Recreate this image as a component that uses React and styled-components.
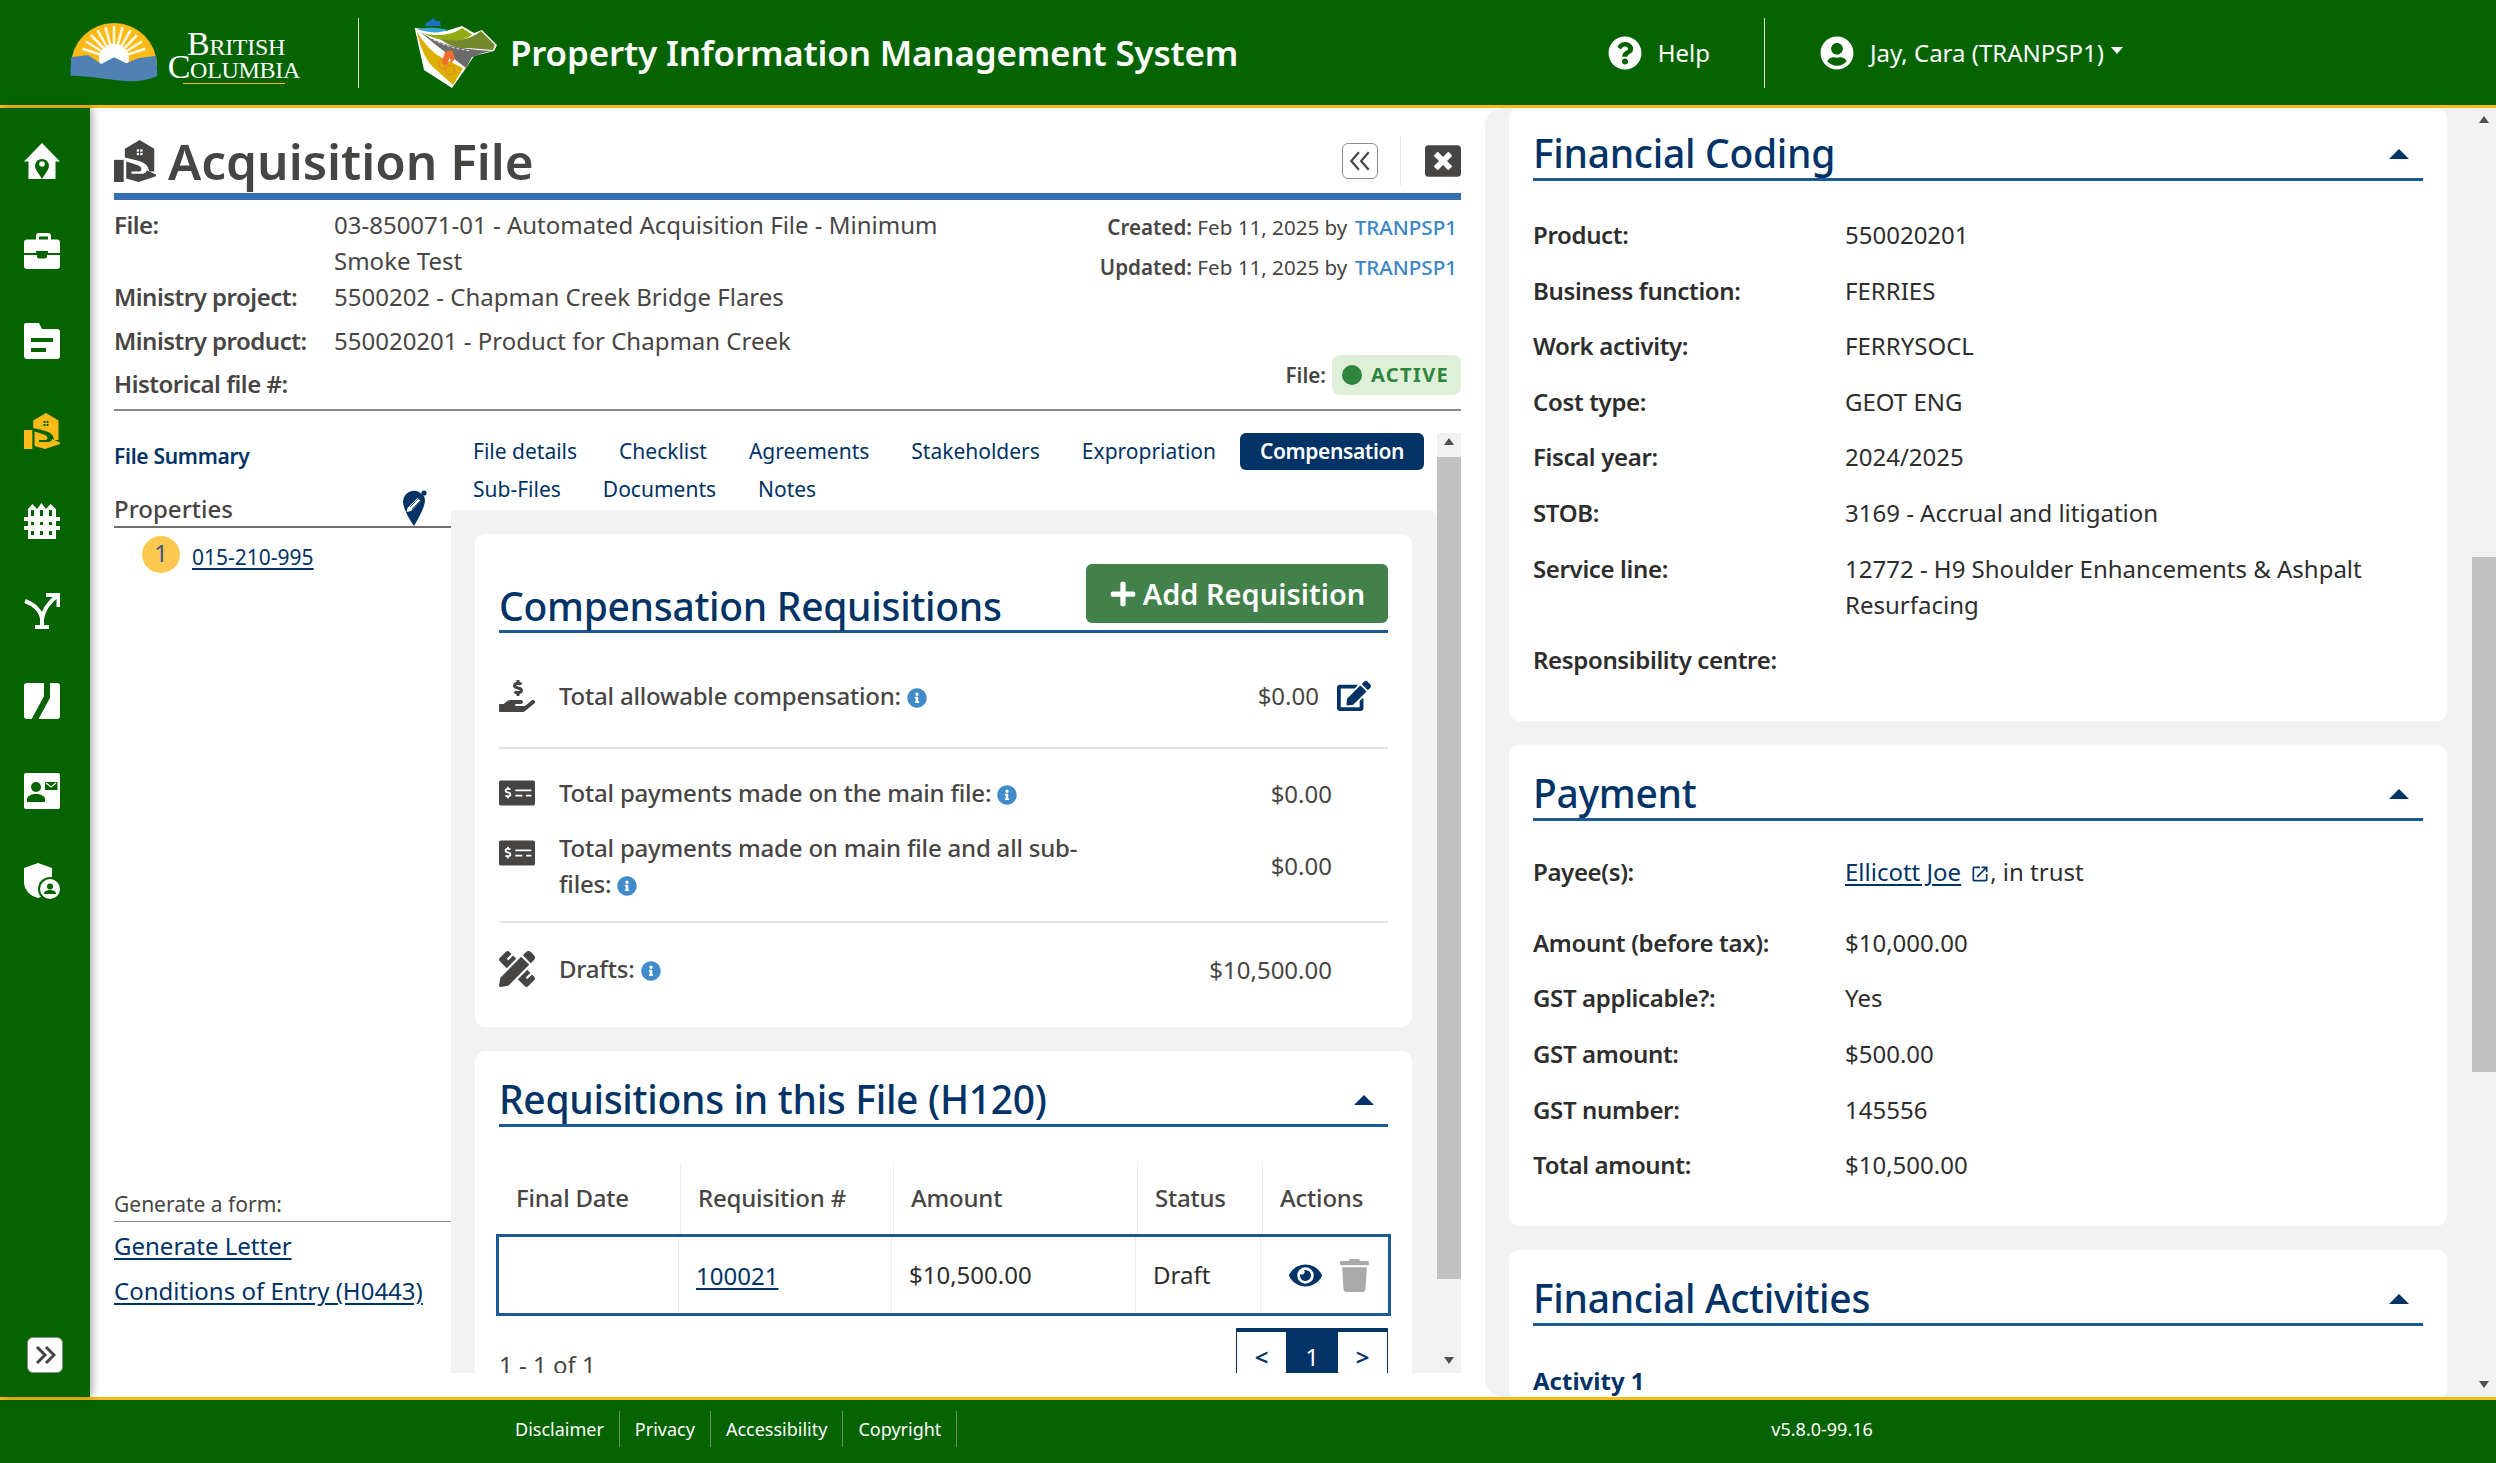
import React from "react"
import styled, { createGlobalStyle } from "styled-components"
import {
  FaEdit,
  FaEye,
  FaHandHoldingUsd,
  FaInfoCircle,
  FaMoneyCheckAlt,
  FaPencilRuler,
  FaPlus,
  FaQuestionCircle,
  FaTrash,
  FaUserCircle,
  FaWindowClose,
} from "react-icons/fa"
import { MdOpenInNew } from "react-icons/md"

const GREEN = "#056300"
const NAVY = "#013366"
const GOLD = "#fcba19"

const GlobalStyle = createGlobalStyle`
  html, body {
    margin: 0;
    padding: 0;
    height: 100%;
    overflow: hidden;
    background: #fff;
  }
  body {
    font-family: "Noto Sans", "Open Sans", sans-serif;
    font-size: 24px;
    line-height: 36px;
    color: #2d2d2d;
  }
  * { box-sizing: border-box; }
`

const Page = styled.div`
  width: 2496px;
  height: 1463px;
  display: flex;
  flex-direction: column;
`

/* ---------- header ---------- */

const Header = styled.header`
  flex: 0 0 108px;
  background: ${GREEN};
  border-bottom: 3px solid ${GOLD};
  display: flex;
  align-items: center;
  padding-left: 70px;
  color: #fff;
`

const BcLogo = styled.div`
  display: flex;
  align-items: center;
  width: 288px;
`

const BcWords = styled.div`
  margin-left: 5px;
  margin-top: 10px;
  width: 135px;
  font-family: "Liberation Serif", serif;
  line-height: 23px;
  font-variant: small-caps;
  letter-spacing: -0.3px;
  text-align: right;
  &::after {
    content: "";
    display: block;
    width: 102px;
    margin: 5px 15px 0 auto;
    border-top: 1px solid ${GOLD};
  }
`

const BcLine = styled.div`
  height: 23px;
  padding-right: ${(p) => p.$pad || 0}px;
  font-size: 34px;
`

const HeadDivider = styled.div`
  width: 1px;
  height: 70px;
  background: #dfe8dc;
`

const AppTitle = styled.div`
  margin-left: 12px;
  font-size: 35px;
  font-weight: 600;
  letter-spacing: -0.2px;
  white-space: nowrap;
`

const HeadLink = styled.div`
  display: flex;
  align-items: center;
  gap: 16px;
  font-size: 24px;
  white-space: nowrap;
`

const LogoSlot = styled.div`
  margin-left: 55px;
  display: flex;
`

const HelpSlot = styled.div`
  margin-left: auto;
  margin-right: 54px;
`

const UserSlot = styled.div`
  margin-left: 55px;
  width: 676px;
`

const CaretDown = styled.span`
  display: inline-block;
  margin-left: -9px;
  margin-top: -4px;
  border-left: 6px solid transparent;
  border-right: 6px solid transparent;
  border-top: 7px solid #fff;
`

/* ---------- body ---------- */

const Body = styled.div`
  flex: 1;
  min-height: 0;
  display: flex;
`

const Sidebar = styled.nav`
  flex: 0 0 90px;
  background: ${GREEN};
  box-shadow: 3px 0 8px rgba(0, 0, 0, 0.3);
  display: flex;
  flex-direction: column;
  padding: 35px 0 24px 24px;
  gap: 54px;
  position: relative;
  z-index: 1;
`

const SideIcon = styled.svg`
  width: 36px;
  height: 36px;
  display: block;
  flex: none;
  fill: ${(p) => p.$color || "#fff"};
`

const ExpandButton = styled.div`
  margin-top: auto;
  margin-left: 3px;
  width: 36px;
  height: 36px;
  border-radius: 6px;
  background: #fff;
  border: 1px solid #8c8c8c;
  display: flex;
  align-items: center;
  justify-content: center;
`

const FilePane = styled.main`
  flex: 0 0 1395px;
  display: flex;
  flex-direction: column;
  padding: 0 24px 24px;
  min-height: 0;
`

const TitleBar = styled.div`
  height: 92px;
  flex: none;
  border-bottom: 7px solid #3470b1;
  display: flex;
  align-items: center;
  padding-top: 20px;
`

const FileTitle = styled.h1`
  margin: 0 0 0 12px;
  font-size: 49.5px;
  line-height: 56px;
  font-weight: 600;
  color: #474543;
`

const TitleButton = styled.div`
  margin-left: auto;
  width: 36px;
  height: 36px;
  border: 1px solid #8c8c8c;
  border-radius: 6px;
  display: flex;
  align-items: center;
  justify-content: center;
`

const TitleDivider = styled.div`
  width: 1px;
  height: 49px;
  margin: 0 24px 0 22px;
  background: #e4e4e4;
`

const InfoBlock = styled.div`
  flex: none;
  height: 211px;
  padding-top: 7px;
  border-bottom: 2px solid #8a8a8a;
  display: flex;
  justify-content: space-between;
`

const InfoRow = styled.div`
  display: grid;
  grid-template-columns: 220px 610px;
  margin-bottom: ${(p) => p.$after || 0}px;
  color: #474543;
`

const InfoLabel = styled.div`
  font-weight: 600;
  letter-spacing: -0.5px;
`

const Audit = styled.div`
  display: flex;
  flex-direction: column;
  align-items: flex-end;
  font-size: 20.6px;
  line-height: 40px;
  color: #474543;
  padding-bottom: 14px;
  height: 100%;
`

const AuditLine = styled.div`
  padding-right: 4px;
  strong { font-weight: 600; }
  a { color: #3a86c8; font-weight: 500; margin-left: 2px; }
`

const StatusLine = styled.div`
  margin-top: auto;
  display: flex;
  align-items: center;
  gap: 6px;
  strong { font-weight: 600; }
`

const StatusBadge = styled.div`
  width: 129px;
  height: 40px;
  border-radius: 8px;
  background: #dff0d8;
  display: flex;
  align-items: center;
  padding-left: 10px;
  gap: 9px;
  font-size: 20px;
  font-weight: 700;
  letter-spacing: 1.4px;
  color: #2e8540;
  &::before {
    content: "";
    width: 20px;
    height: 20px;
    border-radius: 50%;
    background: #2e8540;
  }
`

const Split = styled.div`
  flex: 1;
  min-height: 0;
  margin-top: 22px;
  display: flex;
`

const Summary = styled.aside`
  flex: 0 0 337px;
  display: flex;
  flex-direction: column;
  padding-bottom: 64px;
`

const SummaryLink = styled.div`
  margin-top: 5px;
  font-size: 21px;
  font-weight: 600;
  letter-spacing: -0.3px;
  color: ${NAVY};
`

const PropertiesHead = styled.div`
  margin-top: 2px;
  height: 52px;
  border-bottom: 2px solid #6f6f6f;
  display: flex;
  align-items: flex-end;
  justify-content: space-between;
  padding-right: 24px;
  font-size: 24px;
  font-weight: 500;
  color: #474543;
  span { line-height: 34px; }
`

const PropertyRow = styled.div`
  display: flex;
  align-items: center;
  padding-left: 28px;
  gap: 12px;
  margin-top: 5px;
  font-size: 21px;
`

const NumberDot = styled.div`
  width: 38px;
  height: 37px;
  border-radius: 50%;
  background: #fcc84f;
  color: #38598a;
  text-align: center;
  line-height: 34px;
  font-size: 24px;
`

const TextLink = styled.a`
  color: ${NAVY};
  text-decoration: underline;
  text-underline-offset: 3px;
  white-space: nowrap;
  padding-top: ${(p) => p.$drop || 0}px;
`

const GeneratorHead = styled.div`
  margin-top: auto;
  font-size: 21px;
  line-height: 34px;
  border-bottom: 1px solid #8a8a8a;
  color: #474543;
`

const GeneratorLink = styled.div`
  margin-top: ${(p) => p.$top || 0}px;
  line-height: 36px;
`

const TabsPane = styled.div`
  flex: 1;
  min-width: 0;
  display: flex;
  flex-direction: column;
`

const TabRow = styled.div`
  display: flex;
  height: 38px;
  flex: none;
  padding-left: 1px;
`

const Tab = styled.div`
  height: 37px;
  line-height: 37px;
  padding: 0 ${(p) => (p.$active ? 20 : 21)}px;
  font-size: 21px;
  white-space: nowrap;
  color: ${(p) => (p.$active ? "#fff" : NAVY)};
  background: ${(p) => (p.$active ? NAVY : "transparent")};
  font-weight: ${(p) => (p.$active ? 600 : 400)};
  border-radius: 6px;
  margin-left: ${(p) => (p.$active ? 3 : 0)}px;
  letter-spacing: ${(p) => (p.$active ? "-0.4px" : "0")};
`

const GrayWell = styled.div`
  flex: 1;
  min-height: 0;
  margin-top: 1px;
  background: #f2f2f2;
  border-radius: 0 8px 0 0;
  padding: 24px 25px 0 24px;
  overflow: hidden;
  display: flex;
  flex-direction: column;
  gap: 24px;
`

const Card = styled.section`
  flex: none;
  background: #fff;
  border-radius: 10px;
  padding: ${(p) => p.$top ?? 24}px 24px ${(p) => p.$bottom ?? 33}px 24px;
`

const TitleRow = styled.div`
  display: flex;
  align-items: flex-end;
  justify-content: space-between;
  height: 52px;
  border-bottom: 3px solid #1a5a96;
  padding-right: 14px;
`

const SectionTitle = styled.h2`
  margin: 0;
  font-size: 39px;
  line-height: 50px;
  font-weight: 500;
  letter-spacing: -0.3px;
  color: ${NAVY};
  white-space: nowrap;
`

const CaretUp = styled.span`
  display: block;
  margin-bottom: 19px;
  border-left: 10px solid transparent;
  border-right: 10px solid transparent;
  border-bottom: 10px solid ${NAVY};
`

const CompHead = styled.div`
  height: 69px;
  margin-top: 30px;
  border-bottom: 3px solid #1a5a96;
  display: flex;
  align-items: flex-start;
  justify-content: space-between;
`

const CompTitle = styled(SectionTitle)`
  margin-top: 17px;
`

const AddButton = styled.div`
  width: 302px;
  height: 59px;
  border-radius: 6px;
  background: #42814a;
  color: #fff;
  display: flex;
  align-items: center;
  justify-content: center;
  gap: 6px;
  font-size: 29px;
  font-weight: 600;
`

const Stat = styled.div`
  display: grid;
  grid-template-columns: 60px 1fr auto;
  align-items: center;
  padding: ${(p) => p.$top}px ${(p) => p.$right ?? 56}px ${(p) => p.$bottom ?? 0}px 0;
  border-bottom: ${(p) => (p.$line ? "2px solid #e3e3e3" : "0")};
  color: #474543;
`

const StatIcon = styled.div`
  display: flex;
  color: #474543;
  align-self: ${(p) => p.$self || "center"};
  margin-top: ${(p) => p.$shift || 0}px;
`

const StatLabel = styled.div`
  max-width: 540px;
  font-weight: 500;
  letter-spacing: -0.2px;
`

const Tip = styled(FaInfoCircle)`
  color: #428bca;
  font-size: 20px;
  vertical-align: -3px;
  margin-left: 6px;
`

const StatAmount = styled.div`
  display: flex;
  align-items: center;
  gap: 18px;
  padding-top: ${(p) => p.$shift || 0}px;
`

const TableHead = styled.div`
  display: grid;
  grid-template-columns: 181px 213px 244px 125px 1fr;
  margin-top: 35px;
  height: 72px;
  font-weight: 500;
  color: #474543;
  letter-spacing: -0.2px;
`

const HeadCell = styled.div`
  display: flex;
  align-items: center;
  padding-left: 17px;
  & + & { border-left: 1px solid #eeeeee; }
`

const TableRow = styled.div`
  display: grid;
  grid-template-columns: 179px 213px 244px 125px 1fr;
  margin: 0 -3px;
  height: 82px;
  border: 3px solid #1a5a96;
`

const BodyCell = styled.div`
  display: flex;
  align-items: center;
  gap: 16px;
  padding-left: ${(p) => p.$indent ?? 17}px;
  padding-top: ${(p) => p.$shift || 0}px;
  & + & { border-left: 1px solid #eeeeee; }
`

const TableFoot = styled.div`
  display: flex;
  justify-content: space-between;
  margin-top: 12px;
  height: 60px;
`

const PageCount = styled.div`
  padding-top: 19px;
  color: #474543;
`

const Pager = styled.div`
  display: flex;
  height: 60px;
  border-top: 4px solid ${NAVY};
  border-left: 1px solid ${NAVY};
  border-right: 1px solid ${NAVY};
`

const PagerCell = styled.div`
  width: ${(p) => (p.$active ? 52 : 49)}px;
  text-align: center;
  line-height: 50px;
  color: ${(p) => (p.$active ? "#fff" : NAVY)};
  background: ${(p) => (p.$active ? NAVY : "transparent")};
  font-weight: ${(p) => (p.$active ? 400 : 600)};
`

const Rail = styled.div`
  flex: 0 0 ${(p) => p.$width}px;
  background: #f1f1f1;
  display: flex;
  flex-direction: column;
  align-items: stretch;
  min-height: 0;
  padding-top: ${(p) => p.$pad}px;
`

const RailArrow = styled.span`
  align-self: center;
  flex: none;
  border-left: 5px solid transparent;
  border-right: 5px solid transparent;
  ${(p) => (p.$down ? "border-top: 7px solid #505050;" : "border-bottom: 7px solid #505050;")}
  margin-top: ${(p) => (p.$down ? "auto" : "0")};
  margin-bottom: ${(p) => (p.$down ? 9 : 0)}px;
`

const RailThumb = styled.div`
  flex: none;
  background: #c1c1c1;
  height: ${(p) => p.$height}px;
  margin-top: ${(p) => p.$top}px;
`

const DetailPane = styled.div`
  flex: 1;
  min-width: 0;
  display: flex;
`

const DetailWell = styled.div`
  flex: 1;
  min-width: 0;
  background: #f2f2f2;
  border-radius: 18px 0 0 18px;
  padding: 0 25px 0 24px;
  overflow: hidden;
  display: flex;
  flex-direction: column;
  gap: 24px;
`

const Rows = styled.div`
  margin-top: ${(p) => p.$top}px;
`

const Field = styled.div`
  display: grid;
  grid-template-columns: 312px 1fr;
  padding-top: 10px;
  padding-bottom: ${(p) => p.$after ?? 9.6}px;
`

const FieldLabel = styled.div`
  font-weight: 600;
  letter-spacing: -0.35px;
`

const ActivityTitle = styled.div`
  margin-top: 37px;
  font-weight: 700;
  color: ${NAVY};
`

const LinkIcon = styled(MdOpenInNew)`
  color: ${NAVY};
  font-size: 20px;
  margin-left: 9px;
  vertical-align: -3px;
`

const Footer = styled.footer`
  flex: 0 0 66px;
  background: ${GREEN};
  border-top: 3px solid ${GOLD};
  color: #fff;
  font-size: 18px;
  display: flex;
  align-items: center;
  padding: 0 0 5px 515px;
`

const FootLink = styled.div`
  height: 36px;
  line-height: 36px;
  padding-right: 15px;
  margin-right: 15px;
  border-right: 1px solid #6f8a6c;
`

const Version = styled.div`
  margin-left: 799px;
`

/* ---------- drawings ---------- */

const BcMark = () => {
  const rays = [-72, -58, -44, -30, -15, 0, 15, 30, 44, 58, 72]
  return (
    <svg width="90" height="64" viewBox="0 0 90 64" style={{ flex: "none" }}>
      <path d="M1 45a43 43 0 0186 0z" fill="#fcba19" />
      {rays.map((a) => (
        <path
          key={a}
          d="M44 30V5"
          stroke="#fff7df"
          strokeWidth="2.6"
          transform={`rotate(${a} 44 38)`}
        />
      ))}
      <circle cx="44" cy="38" r="15" fill="#fff" />
      <path
        d="M1.3 36.3L18 34l13.3 9L44 36.3l12.3 6L68 37.3l18.3-2.6 1 20.6c-12 5-24 5.500-36 4.400S14 54 .3 54.700z"
        fill="#4f81b3"
      />
    </svg>
  )
}

const PimsMark = () => (
  <svg width="84" height="70" viewBox="0 0 84 70">
    <path d="M11 8l2-4 3-1 3-3 3 3 4 0 1 5z" fill="#1f6fc4" />
    <path
      d="M.7 10L32 13 48 8l12 7 8-3 15 15-3 6-20 5-8 12-14 20L10 52z"
      fill="#fff"
    />
    <path d="M3 11.500c10-3 24-2 31 .5-7 3-16 3-24 1z" fill="#38a7d8" />
    <path d="M9 15c14 4 30 2 39-5l10 6.500C48 26 24 24 9 15z" fill="#93ab10" />
    <path d="M26 21c16 3 30 1 41-8l14 14-2 5-26-2C44 31 34 27 26 21z" fill="#73892c" />
    <path d="M5 13c16 11 32 18 73 20-12 2-16 5-20 6l-6 11L22 27z" fill="#6b6b6b" />
    <path d="M15 19c12 8 26 12 42 14" stroke="#fff" strokeWidth="0.8" strokeDasharray="3 2" fill="none" />
    <path d="M3 14c3 15 9 28 15 34l21 19 10-17-26-13C15 31 8 22 3 14z" fill="#dcae00" />
    <circle cx="29" cy="46" r="4.600" fill="none" stroke="#ef7b3e" strokeWidth="1" />
    <circle cx="36" cy="52" r="4.600" fill="none" stroke="#ef7b3e" strokeWidth="1" />
    <path d="M31 34l7-2 3 8-4 6-1-6-5 8-3-4z" fill="#ef6b2f" />
  </svg>
)

const HomeIcon = () => (
  <SideIcon viewBox="0 0 36 36">
    <path d="M18 0l18 18.500h-4.500V36h-27V18.500H0z" />
    <path d="M18 36l-6-9.500a7 7 0 1112 0z" fill={GREEN} />
    <circle cx="18" cy="21" r="2.800" />
  </SideIcon>
)

const CaseIcon = () => (
  <SideIcon viewBox="0 0 36 36">
    <path d="M12 7V3a3 3 0 013-3h9a3 3 0 013 3v4h-3V3.500h-9V7z" />
    <path d="M3 6.500h30a3 3 0 013 3V20H24v-2H12v2H0V9.500a3 3 0 013-3z" />
    <path d="M0 22h13v1.500a2 2 0 002 2h6a2 2 0 002-2V22h13v11a3 3 0 01-3 3H3a3 3 0 01-3-3z" />
  </SideIcon>
)

const FolderIcon = () => (
  <SideIcon viewBox="0 0 36 36">
    <path d="M2 0h13l3 6h15a3 3 0 013 3v24a3 3 0 01-3 3H3a3 3 0 01-3-3V2a2 2 0 012-2z" />
    <rect x="7" y="15" width="22" height="4" fill={GREEN} />
    <rect x="7" y="25" width="15" height="4" fill={GREEN} />
  </SideIcon>
)

const AcquireIcon = ({ color, hole, size = 36 }) => (
  <SideIcon viewBox="0 0 36 36" $color={color} style={{ width: size, height: size }}>
    <path d="M22 0l12.500 7.500V27H30c0-5-4-8-10-9.500L9.300 15V7.500z" />
    <rect y="17" width="8.300" height="19" />
    <path d="M10.500 18.500l9.500 3c4 1.500 4.500 4.500 2 5.500h-7v2h9c3 0 4-2 4-3l8 3.500V31l-15 5-10.500-3z" />
    <g fill={hole}>
      <rect x="19.500" y="8" width="2" height="2" />
      <rect x="22.500" y="8" width="2" height="2" />
      <rect x="19.500" y="11" width="2" height="2" />
      <rect x="22.500" y="11" width="2" height="2" />
    </g>
  </SideIcon>
)

const FenceIcon = () => (
  <SideIcon viewBox="0 0 36 36">
    <path d="M4 36V6l4.500-5L13 6l4.500-6L22 6l4.500-5L32 6v30z" />
    <rect y="14" width="36" height="4" />
    <rect y="23" width="36" height="4" />
    <g fill={GREEN}>
      <rect x="7" y="7" width="3" height="6" />
      <rect x="16" y="7" width="3" height="6" />
      <rect x="25" y="7" width="3" height="6" />
      <rect x="7" y="19" width="3" height="3" />
      <rect x="16" y="19" width="3" height="3" />
      <rect x="25" y="19" width="3" height="3" />
      <rect x="7" y="28" width="3" height="4" />
      <rect x="16" y="28" width="3" height="4" />
      <rect x="25" y="28" width="3" height="4" />
    </g>
  </SideIcon>
)

const ForkIcon = () => (
  <SideIcon viewBox="0 0 36 36" style={{ fill: "none" }}>
    <path
      d="M1 8c9 3 16 10 17 18 1-8 6-16 16-24M18 26v9M11 34h14M22 2h12.500v12"
      stroke="#fff"
      strokeWidth="4"
    />
  </SideIcon>
)

const RoadIcon = () => (
  <SideIcon viewBox="0 0 36 36">
    <rect width="36" height="36" rx="3" />
    <path d="M23 -1v15L10 38" stroke={GREEN} strokeWidth="6" fill="none" />
  </SideIcon>
)

const ContactIcon = () => (
  <SideIcon viewBox="0 0 36 36">
    <rect width="36" height="36" rx="2" />
    <circle cx="12" cy="14" r="5" fill={GREEN} />
    <path d="M3 29v-3c0-3 5-5 9-5s9 2 9 5v3z" fill={GREEN} />
    <rect x="21" y="9" width="12.500" height="8" fill={GREEN} />
    <path d="M22 10l5 4 5-4" stroke="#fff" strokeWidth="1.200" fill="none" />
  </SideIcon>
)

const GuardIcon = () => (
  <SideIcon viewBox="0 0 36 36">
    <path d="M14 0l14 5v14c0 8-6 14-14 16C6 33 0 27 0 19V5z" />
    <circle cx="26" cy="26" r="12" fill={GREEN} />
    <circle cx="26" cy="26" r="10" />
    <circle cx="26" cy="23.500" r="3" fill={GREEN} />
    <path d="M20 31c0-3 3-4 6-4s6 1 6 4z" fill={GREEN} />
  </SideIcon>
)

const Chevrons = ({ left, size = 22, color = "#474543", weight = 3 }) => (
  <svg width={size} height={size} viewBox="0 0 22 22" fill="none" stroke={color} strokeWidth={weight}>
    <path
      d={left ? "M10 3L3 11l7 8M19 3l-7 8 7 8" : "M3 3l8 8-8 8M12 3l8 8-8 8"}
    />
  </svg>
)

const PinPencil = () => (
  <svg width="24" height="36" viewBox="0 0 24 36">
    <path d="M16 2a11 11 0 00-16 9c0 7 6 18 11 25 4-7 10-17 11-25a11 11 0 00-1-5z" fill={NAVY} />
    <circle cx="21" cy="3" r="2.600" fill={NAVY} />
    <path d="M4.500 18l10-10 3 3-9.500 10-4.500 1z" fill="#fff" />
    <path d="M7 17l8-8M9 19l8-8" stroke={NAVY} strokeWidth="0.700" />
  </svg>
)

const tabsTop = ["File details", "Checklist", "Agreements", "Stakeholders", "Expropriation"]
const tabsBottom = ["Sub-Files", "Documents", "Notes"]

const coding = [
  ["Product:", "550020201"],
  ["Business function:", "FERRIES"],
  ["Work activity:", "FERRYSOCL"],
  ["Cost type:", "GEOT ENG"],
  ["Fiscal year:", "2024/2025"],
  ["STOB:", "3169 - Accrual and litigation"],
  ["Service line:", "12772 - H9 Shoulder Enhancements & Ashpalt Resurfacing"],
  ["Responsibility centre:", ""],
]

const payment = [
  ["Amount (before tax):", "$10,000.00"],
  ["GST applicable?:", "Yes"],
  ["GST amount:", "$500.00"],
  ["GST number:", "145556"],
  ["Total amount:", "$10,500.00"],
]

export default function App() {
  return (
    <Page>
      <GlobalStyle />
      <Header>
        <BcLogo>
          <BcMark />
          <BcWords>
            <BcLine $pad={15}>British</BcLine>
            <BcLine>Columbia</BcLine>
          </BcWords>
        </BcLogo>
        <HeadDivider />
        <LogoSlot>
          <PimsMark />
        </LogoSlot>
        <AppTitle>Property Information Management System</AppTitle>
        <HelpSlot>
          <HeadLink>
            <FaQuestionCircle size={34} />
            Help
          </HeadLink>
        </HelpSlot>
        <HeadDivider />
        <UserSlot>
          <HeadLink>
            <FaUserCircle size={34} />
            Jay, Cara (TRANPSP1)
            <CaretDown />
          </HeadLink>
        </UserSlot>
      </Header>

      <Body>
        <Sidebar>
          <HomeIcon />
          <CaseIcon />
          <FolderIcon />
          <AcquireIcon color={GOLD} hole={GREEN} />
          <FenceIcon />
          <ForkIcon />
          <RoadIcon />
          <ContactIcon />
          <GuardIcon />
          <ExpandButton>
            <Chevrons />
          </ExpandButton>
        </Sidebar>

        <FilePane>
          <TitleBar>
            <AcquireIcon color="#474543" hole="#fff" size={42} />
            <FileTitle>Acquisition File</FileTitle>
            <TitleButton>
              <Chevrons left size={24} weight={2} />
            </TitleButton>
            <TitleDivider />
            <FaWindowClose size={36} color="#474543" />
          </TitleBar>

          <InfoBlock>
            <div>
              <InfoRow>
                <InfoLabel>File:</InfoLabel>
                <div>03-850071-01 - Automated Acquisition File - Minimum Smoke Test</div>
              </InfoRow>
              <InfoRow $after={8}>
                <InfoLabel>Ministry project:</InfoLabel>
                <div>5500202 - Chapman Creek Bridge Flares</div>
              </InfoRow>
              <InfoRow $after={7}>
                <InfoLabel>Ministry product:</InfoLabel>
                <div>550020201 - Product for Chapman Creek</div>
              </InfoRow>
              <InfoRow>
                <InfoLabel>Historical file #:</InfoLabel>
              </InfoRow>
            </div>
            <Audit>
              <AuditLine>
                <strong>Created:</strong> Feb 11, 2025 by <a>TRANPSP1</a>
              </AuditLine>
              <AuditLine>
                <strong>Updated:</strong> Feb 11, 2025 by <a>TRANPSP1</a>
              </AuditLine>
              <StatusLine>
                <strong>File:</strong>
                <StatusBadge>ACTIVE</StatusBadge>
              </StatusLine>
            </Audit>
          </InfoBlock>

          <Split>
            <Summary>
              <SummaryLink>File Summary</SummaryLink>
              <PropertiesHead>
                <span>Properties</span>
                <PinPencil />
              </PropertiesHead>
              <PropertyRow>
                <NumberDot>1</NumberDot>
                <TextLink $drop={6}>015-210-995</TextLink>
              </PropertyRow>
              <GeneratorHead>Generate a form:</GeneratorHead>
              <GeneratorLink $top={6}>
                <TextLink>Generate Letter</TextLink>
              </GeneratorLink>
              <GeneratorLink $top={9}>
                <TextLink>Conditions of Entry (H0443)</TextLink>
              </GeneratorLink>
            </Summary>

            <TabsPane>
              <TabRow>
                {tabsTop.map((t) => (
                  <Tab key={t}>{t}</Tab>
                ))}
                <Tab $active>Compensation</Tab>
              </TabRow>
              <TabRow>
                {tabsBottom.map((t) => (
                  <Tab key={t}>{t}</Tab>
                ))}
              </TabRow>
              <GrayWell>
                <Card $top={0} $bottom={0}>
                  <CompHead>
                    <CompTitle>Compensation Requisitions</CompTitle>
                    <AddButton>
                      <FaPlus size={28} />
                      Add Requisition
                    </AddButton>
                  </CompHead>
                  <Stat $top={45} $bottom={33} $right={17} $line>
                    <StatIcon>
                      <FaHandHoldingUsd size={36} />
                    </StatIcon>
                    <StatLabel>
                      Total allowable compensation:
                      <Tip />
                    </StatLabel>
                    <StatAmount>
                      $0.00
                      <FaEdit size={34} color={NAVY} />
                    </StatAmount>
                  </Stat>
                  <Stat $top={24}>
                    <StatIcon>
                      <FaMoneyCheckAlt size={36} />
                    </StatIcon>
                    <StatLabel>
                      Total payments made on the main file:
                      <Tip />
                    </StatLabel>
                    <StatAmount $shift={3}>$0.00</StatAmount>
                  </Stat>
                  <Stat $top={18} $bottom={19} $line>
                    <StatIcon $self="flex-start" $shift={5}>
                      <FaMoneyCheckAlt size={36} />
                    </StatIcon>
                    <StatLabel>
                      Total payments made on main file and all sub-files:
                      <Tip />
                    </StatLabel>
                    <StatAmount>$0.00</StatAmount>
                  </Stat>
                  <Stat $top={26} $bottom={39}>
                    <StatIcon>
                      <FaPencilRuler size={36} />
                    </StatIcon>
                    <StatLabel>
                      Drafts:
                      <Tip />
                    </StatLabel>
                    <StatAmount $shift={3}>$10,500.00</StatAmount>
                  </Stat>
                </Card>

                <Card $bottom={0}>
                  <TitleRow>
                    <SectionTitle>Requisitions in this File (H120)</SectionTitle>
                    <CaretUp />
                  </TitleRow>
                  <TableHead>
                    <HeadCell>Final Date</HeadCell>
                    <HeadCell>Requisition #</HeadCell>
                    <HeadCell>Amount</HeadCell>
                    <HeadCell>Status</HeadCell>
                    <HeadCell>Actions</HeadCell>
                  </TableHead>
                  <TableRow>
                    <BodyCell />
                    <BodyCell $shift={2}>
                      <TextLink>100021</TextLink>
                    </BodyCell>
                    <BodyCell>$10,500.00</BodyCell>
                    <BodyCell>Draft</BodyCell>
                    <BodyCell $indent={28}>
                      <FaEye size={33} color={NAVY} />
                      <FaTrash size={33} color="#aaaaaa" />
                    </BodyCell>
                  </TableRow>
                  <TableFoot>
                    <PageCount>1 - 1 of 1</PageCount>
                    <Pager>
                      <PagerCell>&lt;</PagerCell>
                      <PagerCell $active>1</PagerCell>
                      <PagerCell>&gt;</PagerCell>
                    </Pager>
                  </TableFoot>
                </Card>
              </GrayWell>
            </TabsPane>
            <Rail $width={24} $pad={5}>
              <RailArrow />
              <RailThumb $top={12} $height={822} />
              <RailArrow $down />
            </Rail>
          </Split>
        </FilePane>

        <DetailPane>
          <DetailWell>
            <Card $top={21}>
              <TitleRow>
                <SectionTitle>Financial Coding</SectionTitle>
                <CaretUp />
              </TitleRow>
              <Rows $top={26}>
                {coding.map(([label, value]) => (
                  <Field key={label}>
                    <FieldLabel>{label}</FieldLabel>
                    <div>{value}</div>
                  </Field>
                ))}
              </Rows>
            </Card>

            <Card>
              <TitleRow>
                <SectionTitle>Payment</SectionTitle>
                <CaretUp />
              </TitleRow>
              <Rows $top={23}>
                <Field $after={25}>
                  <FieldLabel>Payee(s):</FieldLabel>
                  <div>
                    <TextLink>Ellicott Joe</TextLink>
                    <LinkIcon />, in trust
                  </div>
                </Field>
                {payment.map(([label, value]) => (
                  <Field key={label}>
                    <FieldLabel>{label}</FieldLabel>
                    <div>{value}</div>
                  </Field>
                ))}
              </Rows>
            </Card>

            <Card $bottom={0}>
              <TitleRow>
                <SectionTitle>Financial Activities</SectionTitle>
                <CaretUp />
              </TitleRow>
              <ActivityTitle>Activity 1</ActivityTitle>
            </Card>
          </DetailWell>
          <Rail $width={24} $pad={8}>
            <RailArrow />
            <RailThumb $top={434} $height={515} />
            <RailArrow $down />
          </Rail>
        </DetailPane>
      </Body>

      <Footer>
        <FootLink>Disclaimer</FootLink>
        <FootLink>Privacy</FootLink>
        <FootLink>Accessibility</FootLink>
        <FootLink>Copyright</FootLink>
        <Version>v5.8.0-99.16</Version>
      </Footer>
    </Page>
  )
}
